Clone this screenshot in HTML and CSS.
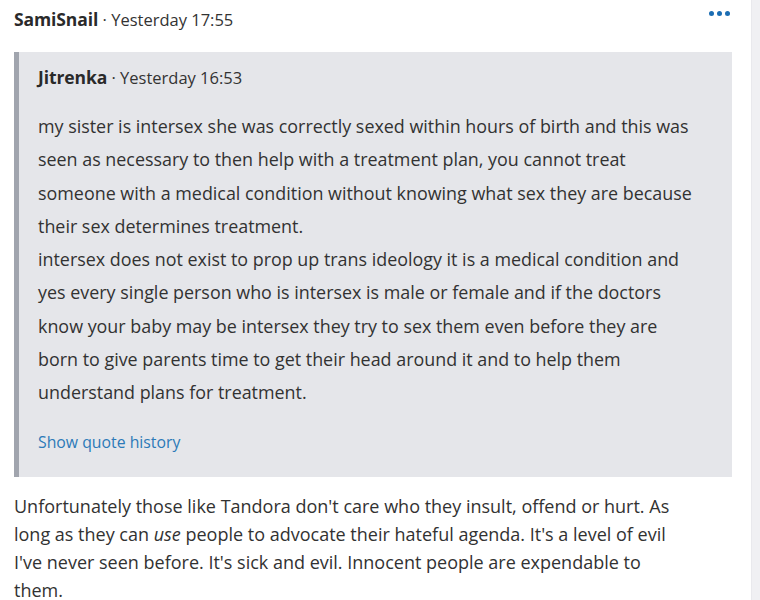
FILE: index.html
```html
<!DOCTYPE html>
<html>
<head>
<meta charset="utf-8">
<link rel="stylesheet" href="styles.css">
</head>
<body>
<div class="page">
  <div class="post">
    <div class="post-head">
      <div class="meta"><span class="author">SamiSnail</span> <span class="time">· Yesterday 17:55</span></div>
      <div class="more" aria-label="More options"><span></span><span></span><span></span></div>
    </div>
    <blockquote class="quote">
      <div class="meta quote-meta"><span class="author">Jitrenka</span> <span class="time">· Yesterday 16:53</span></div>
      <p class="quote-text">my sister is intersex she was correctly sexed within hours of birth and this was seen as necessary to then help with a treatment plan, you cannot treat someone with a medical condition without knowing what sex they are because their sex determines treatment.<br>intersex does not exist to prop up trans ideology it is a medical condition and yes every single person who is intersex is male or female and if the doctors know your baby may be intersex they try to sex them even before they are born to give parents time to get their head around it and to help them understand plans for treatment.</p>
      <a class="history" href="#">Show quote history</a>
    </blockquote>
    <p class="body-text">Unfortunately those like Tandora don't care who they insult, offend or hurt. As long as they can <em>use</em> people to advocate their hateful agenda. It's a level of evil I've never seen before. It's sick and evil. Innocent people are expendable to them.</p>
  </div>
  <div class="side"></div>
</div>
</body>
</html>
```

FILE: styles.css
```css
html, body {
  margin: 0;
  padding: 0;
  background: #ffffff;
}
body {
  font-family: "Open Sans", "Noto Sans", "Liberation Sans", sans-serif;
  color: #323232;
}
.page {
  display: flex;
  width: 760px;
  height: 600px;
  overflow: hidden;
}
.post {
  width: 751px;
  box-sizing: border-box;
  padding: 6px 19px 0 14px;
  flex: none;
}
.side {
  flex: 1;
  background: #f0f0f3;
  border-left: 1px solid #e9e9ed;
}
.post-head {
  display: flex;
  justify-content: space-between;
  align-items: flex-start;
  height: 46px;
}
.meta {
  font-size: 16.5px;
  line-height: 26px;
  height: 26px;
}
.author {
  font-weight: 700;
  color: #2a2a2a;
  font-size: 17.5px;
  letter-spacing: -0.1px;
}
.time {
  color: #333;
}
.more {
  display: flex;
  gap: 3px;
  padding: 5px 2px 0 0;
}
.more span {
  width: 5px;
  height: 5px;
  border-radius: 50%;
  background: #1b6db3;
}
.quote {
  margin: 0;
  background: #e5e6ea;
  border-left: 5px solid #a1a5ae;
  padding: 12px 32px 22px 19px;
}
.quote-text {
  margin: 20px 0 19px;
  font-size: 17.9px;
  line-height: 33.3px;
}
.history {
  display: block;
  color: #2c7ab8;
  text-decoration: none;
  font-size: 15.8px;
  line-height: 26px;
}
.body-text {
  margin: 15px 47px 0 0;
  font-size: 18px;
  line-height: 28px;
}
```
